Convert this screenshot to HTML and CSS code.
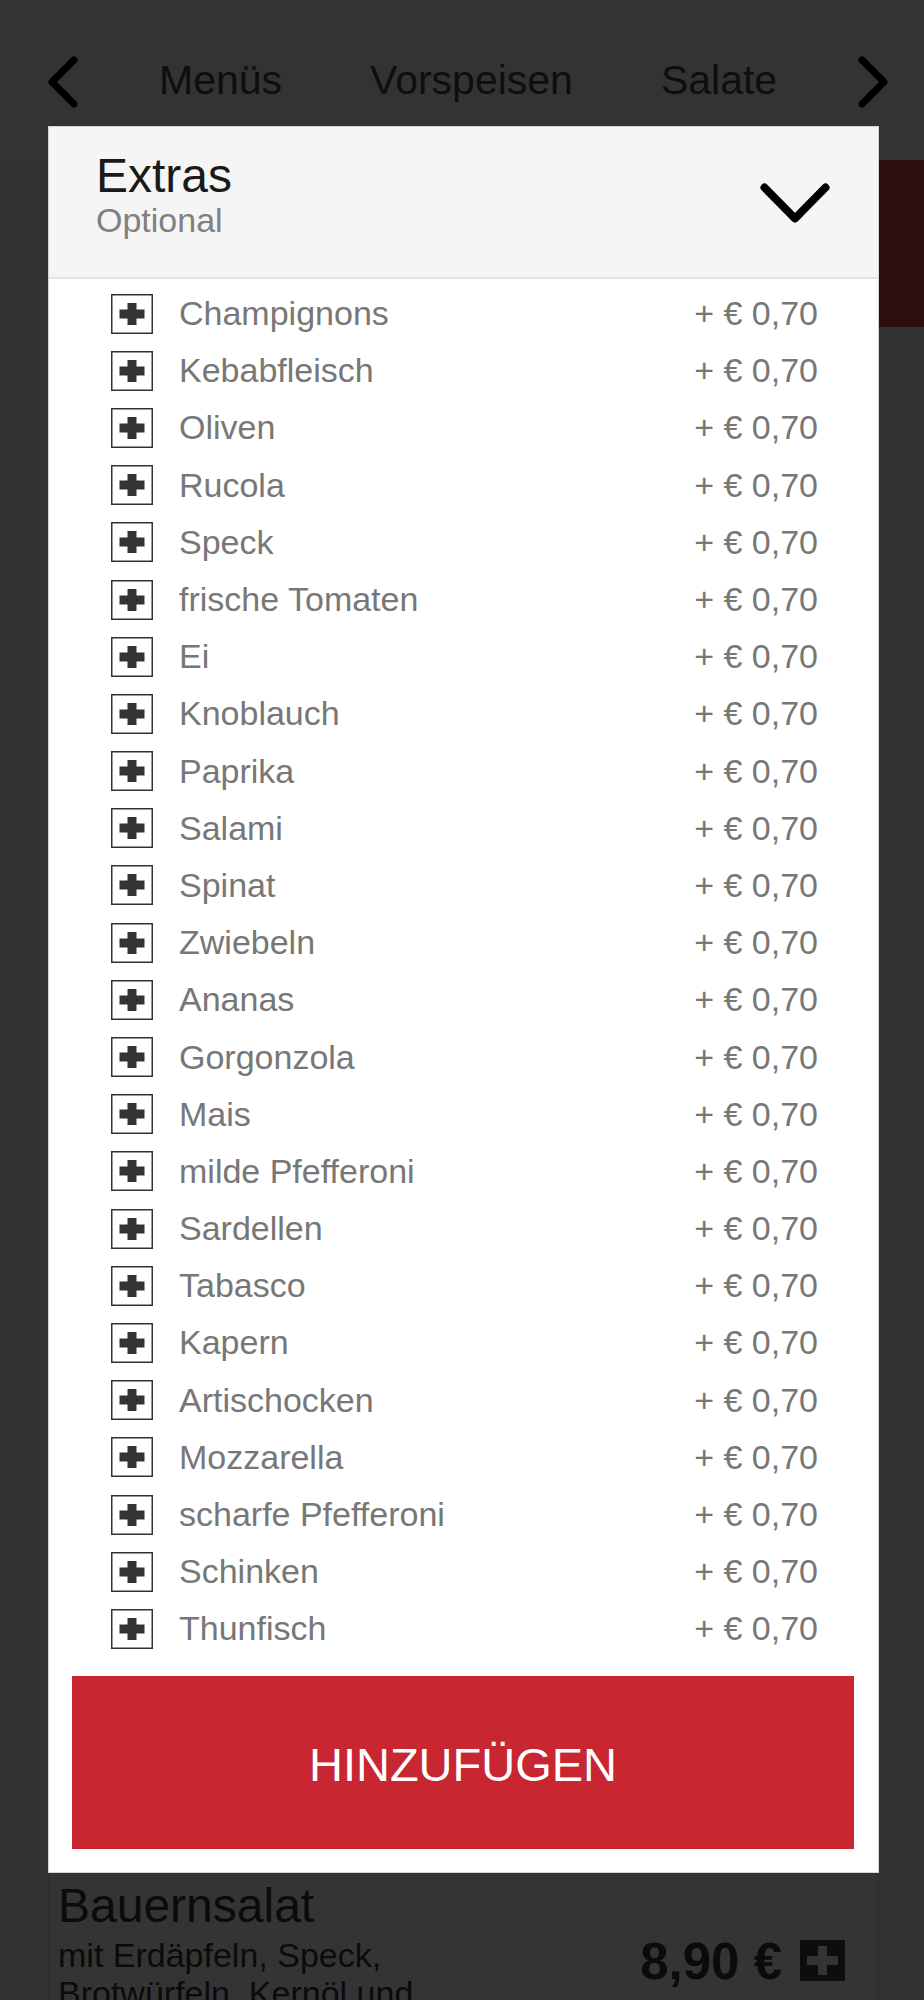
FILE: index.html
```html
<!DOCTYPE html>
<html lang="de">
<head>
    <meta charset="UTF-8">
    <meta name="viewport" content="width=device-width, initial-scale=1.0">
    <title>Salate – Extras</title>
    <link rel="stylesheet" href="styles.css">
</head>
<body>
    <!-- Seite hinter dem Dialog -->
    <div class="page">
        <nav class="cat-nav">
            <svg class="cat-arrow" width="32" height="52" viewBox="0 0 32 52"><polyline points="27,4 5,26 27,48"/></svg>
            <div class="cat-track">
                <span class="cat-item">Menüs</span>
                <span class="cat-item">Vorspeisen</span>
                <span class="cat-item">Salate</span>
            </div>
            <svg class="cat-arrow" width="32" height="52" viewBox="0 0 32 52"><polyline points="5,4 27,26 5,48"/></svg>
        </nav>

        <div class="banner">
            <div class="banner-btn"></div>
        </div>

        <div class="dish-list">
            <div class="dish">
                <div class="dish-title">Bauernsalat</div>
                <div class="dish-body">
                    <div class="dish-desc">mit Erdäpfeln, Speck, Brotwürfeln, Kernöl und Kürbiskernen</div>
                    <div class="dish-price">
                        <span>8,90 €</span>
                        <svg width="45" height="41" viewBox="0 0 45 41">
                            <rect width="45" height="41" fill="#0d0d0d"/>
                            <path d="M18 6h9v10h11v9H27v10h-9V25H7v-9h11z" fill="#333"/>
                        </svg>
                    </div>
                </div>
            </div>
        </div>
    </div>

    <!-- Dialog: Extras -->
    <div class="modal">
        <div class="modal-head">
            <div>
                <div class="modal-title">Extras</div>
                <div class="modal-sub">Optional</div>
            </div>
            <svg class="modal-toggle" width="70" height="40" viewBox="0 0 70 40"><polyline points="4.5,4.5 35,35.5 65.5,4.5"/></svg>
        </div>

        <ul class="extras">
            <li class="extra"><svg class="extra-check" width="42" height="40" viewBox="0 0 42 40"><rect x="0.75" y="0.75" width="40.5" height="38.5"/><path d="M16.5 9h9v6.5h8v9h-8V31h-9v-6.5h-8v-9h8z"/></svg><span class="extra-name">Champignons</span><span class="extra-price">+ € 0,70</span></li>
            <li class="extra"><svg class="extra-check" width="42" height="40" viewBox="0 0 42 40"><rect x="0.75" y="0.75" width="40.5" height="38.5"/><path d="M16.5 9h9v6.5h8v9h-8V31h-9v-6.5h-8v-9h8z"/></svg><span class="extra-name">Kebabfleisch</span><span class="extra-price">+ € 0,70</span></li>
            <li class="extra"><svg class="extra-check" width="42" height="40" viewBox="0 0 42 40"><rect x="0.75" y="0.75" width="40.5" height="38.5"/><path d="M16.5 9h9v6.5h8v9h-8V31h-9v-6.5h-8v-9h8z"/></svg><span class="extra-name">Oliven</span><span class="extra-price">+ € 0,70</span></li>
            <li class="extra"><svg class="extra-check" width="42" height="40" viewBox="0 0 42 40"><rect x="0.75" y="0.75" width="40.5" height="38.5"/><path d="M16.5 9h9v6.5h8v9h-8V31h-9v-6.5h-8v-9h8z"/></svg><span class="extra-name">Rucola</span><span class="extra-price">+ € 0,70</span></li>
            <li class="extra"><svg class="extra-check" width="42" height="40" viewBox="0 0 42 40"><rect x="0.75" y="0.75" width="40.5" height="38.5"/><path d="M16.5 9h9v6.5h8v9h-8V31h-9v-6.5h-8v-9h8z"/></svg><span class="extra-name">Speck</span><span class="extra-price">+ € 0,70</span></li>
            <li class="extra"><svg class="extra-check" width="42" height="40" viewBox="0 0 42 40"><rect x="0.75" y="0.75" width="40.5" height="38.5"/><path d="M16.5 9h9v6.5h8v9h-8V31h-9v-6.5h-8v-9h8z"/></svg><span class="extra-name">frische Tomaten</span><span class="extra-price">+ € 0,70</span></li>
            <li class="extra"><svg class="extra-check" width="42" height="40" viewBox="0 0 42 40"><rect x="0.75" y="0.75" width="40.5" height="38.5"/><path d="M16.5 9h9v6.5h8v9h-8V31h-9v-6.5h-8v-9h8z"/></svg><span class="extra-name">Ei</span><span class="extra-price">+ € 0,70</span></li>
            <li class="extra"><svg class="extra-check" width="42" height="40" viewBox="0 0 42 40"><rect x="0.75" y="0.75" width="40.5" height="38.5"/><path d="M16.5 9h9v6.5h8v9h-8V31h-9v-6.5h-8v-9h8z"/></svg><span class="extra-name">Knoblauch</span><span class="extra-price">+ € 0,70</span></li>
            <li class="extra"><svg class="extra-check" width="42" height="40" viewBox="0 0 42 40"><rect x="0.75" y="0.75" width="40.5" height="38.5"/><path d="M16.5 9h9v6.5h8v9h-8V31h-9v-6.5h-8v-9h8z"/></svg><span class="extra-name">Paprika</span><span class="extra-price">+ € 0,70</span></li>
            <li class="extra"><svg class="extra-check" width="42" height="40" viewBox="0 0 42 40"><rect x="0.75" y="0.75" width="40.5" height="38.5"/><path d="M16.5 9h9v6.5h8v9h-8V31h-9v-6.5h-8v-9h8z"/></svg><span class="extra-name">Salami</span><span class="extra-price">+ € 0,70</span></li>
            <li class="extra"><svg class="extra-check" width="42" height="40" viewBox="0 0 42 40"><rect x="0.75" y="0.75" width="40.5" height="38.5"/><path d="M16.5 9h9v6.5h8v9h-8V31h-9v-6.5h-8v-9h8z"/></svg><span class="extra-name">Spinat</span><span class="extra-price">+ € 0,70</span></li>
            <li class="extra"><svg class="extra-check" width="42" height="40" viewBox="0 0 42 40"><rect x="0.75" y="0.75" width="40.5" height="38.5"/><path d="M16.5 9h9v6.5h8v9h-8V31h-9v-6.5h-8v-9h8z"/></svg><span class="extra-name">Zwiebeln</span><span class="extra-price">+ € 0,70</span></li>
            <li class="extra"><svg class="extra-check" width="42" height="40" viewBox="0 0 42 40"><rect x="0.75" y="0.75" width="40.5" height="38.5"/><path d="M16.5 9h9v6.5h8v9h-8V31h-9v-6.5h-8v-9h8z"/></svg><span class="extra-name">Ananas</span><span class="extra-price">+ € 0,70</span></li>
            <li class="extra"><svg class="extra-check" width="42" height="40" viewBox="0 0 42 40"><rect x="0.75" y="0.75" width="40.5" height="38.5"/><path d="M16.5 9h9v6.5h8v9h-8V31h-9v-6.5h-8v-9h8z"/></svg><span class="extra-name">Gorgonzola</span><span class="extra-price">+ € 0,70</span></li>
            <li class="extra"><svg class="extra-check" width="42" height="40" viewBox="0 0 42 40"><rect x="0.75" y="0.75" width="40.5" height="38.5"/><path d="M16.5 9h9v6.5h8v9h-8V31h-9v-6.5h-8v-9h8z"/></svg><span class="extra-name">Mais</span><span class="extra-price">+ € 0,70</span></li>
            <li class="extra"><svg class="extra-check" width="42" height="40" viewBox="0 0 42 40"><rect x="0.75" y="0.75" width="40.5" height="38.5"/><path d="M16.5 9h9v6.5h8v9h-8V31h-9v-6.5h-8v-9h8z"/></svg><span class="extra-name">milde Pfefferoni</span><span class="extra-price">+ € 0,70</span></li>
            <li class="extra"><svg class="extra-check" width="42" height="40" viewBox="0 0 42 40"><rect x="0.75" y="0.75" width="40.5" height="38.5"/><path d="M16.5 9h9v6.5h8v9h-8V31h-9v-6.5h-8v-9h8z"/></svg><span class="extra-name">Sardellen</span><span class="extra-price">+ € 0,70</span></li>
            <li class="extra"><svg class="extra-check" width="42" height="40" viewBox="0 0 42 40"><rect x="0.75" y="0.75" width="40.5" height="38.5"/><path d="M16.5 9h9v6.5h8v9h-8V31h-9v-6.5h-8v-9h8z"/></svg><span class="extra-name">Tabasco</span><span class="extra-price">+ € 0,70</span></li>
            <li class="extra"><svg class="extra-check" width="42" height="40" viewBox="0 0 42 40"><rect x="0.75" y="0.75" width="40.5" height="38.5"/><path d="M16.5 9h9v6.5h8v9h-8V31h-9v-6.5h-8v-9h8z"/></svg><span class="extra-name">Kapern</span><span class="extra-price">+ € 0,70</span></li>
            <li class="extra"><svg class="extra-check" width="42" height="40" viewBox="0 0 42 40"><rect x="0.75" y="0.75" width="40.5" height="38.5"/><path d="M16.5 9h9v6.5h8v9h-8V31h-9v-6.5h-8v-9h8z"/></svg><span class="extra-name">Artischocken</span><span class="extra-price">+ € 0,70</span></li>
            <li class="extra"><svg class="extra-check" width="42" height="40" viewBox="0 0 42 40"><rect x="0.75" y="0.75" width="40.5" height="38.5"/><path d="M16.5 9h9v6.5h8v9h-8V31h-9v-6.5h-8v-9h8z"/></svg><span class="extra-name">Mozzarella</span><span class="extra-price">+ € 0,70</span></li>
            <li class="extra"><svg class="extra-check" width="42" height="40" viewBox="0 0 42 40"><rect x="0.75" y="0.75" width="40.5" height="38.5"/><path d="M16.5 9h9v6.5h8v9h-8V31h-9v-6.5h-8v-9h8z"/></svg><span class="extra-name">scharfe Pfefferoni</span><span class="extra-price">+ € 0,70</span></li>
            <li class="extra"><svg class="extra-check" width="42" height="40" viewBox="0 0 42 40"><rect x="0.75" y="0.75" width="40.5" height="38.5"/><path d="M16.5 9h9v6.5h8v9h-8V31h-9v-6.5h-8v-9h8z"/></svg><span class="extra-name">Schinken</span><span class="extra-price">+ € 0,70</span></li>
            <li class="extra"><svg class="extra-check" width="42" height="40" viewBox="0 0 42 40"><rect x="0.75" y="0.75" width="40.5" height="38.5"/><path d="M16.5 9h9v6.5h8v9h-8V31h-9v-6.5h-8v-9h8z"/></svg><span class="extra-name">Thunfisch</span><span class="extra-price">+ € 0,70</span></li>
        </ul>

        <button class="add-btn">HINZUFÜGEN</button>
    </div>
</body>
</html>
```

FILE: styles.css
```css
body {
    margin: 0;
    height: 2000px;
    overflow: hidden;
    background: #313131;
    font-family: "Liberation Sans", Arial, sans-serif;
    position: relative;
}

/* Kategorien oben */
.cat-nav {
    display: flex;
    align-items: flex-start;
    height: 160px;
    box-sizing: border-box;
    padding: 56px 35px 0 47px;
    background: #333;
}

.cat-arrow {
    flex: none;
}

.cat-arrow polyline {
    fill: none;
    stroke: #000;
    stroke-width: 7;
    stroke-linecap: round;
    stroke-linejoin: round;
}

.cat-track {
    flex: 1;
    display: flex;
    gap: 88px;
    padding-left: 80px;
    white-space: nowrap;
}

.cat-item {
    font-size: 41px;
    line-height: 48px;
    color: #0e0e0e;
}

.banner {
    display: flex;
    justify-content: flex-end;
    height: 167px;
    background: #313131;
}

.banner-btn {
    width: 140px;
    background: #2d0d10;
}

/* Liste der Gerichte, großteils vom Dialog verdeckt */
.dish-list {
    margin-top: 1541px;
    padding: 0 49px 0 47px;
}

.dish {
    background: #343434;
    border-left: 3px solid #2f2f2f;
    padding: 12px 30px 40px 8px;
}

.dish-title {
    font-size: 48px;
    line-height: 1.1;
    color: #0b0b0b;
}

.dish-body {
    display: flex;
    justify-content: space-between;
    margin-top: 3px;
}

.dish-desc {
    width: 420px;
    font-size: 34px;
    line-height: 38px;
    color: #0b0b0b;
}

.dish-price {
    display: flex;
    align-items: flex-start;
    gap: 18px;
    font-size: 51px;
    line-height: 51px;
    font-weight: bold;
    color: #0b0b0b;
}

.dish-price svg {
    margin-top: 4px;
}

/* Dialog */
.modal {
    position: absolute;
    top: 126px;
    left: 48px;
    width: 831px;
    box-sizing: border-box;
    background: #fff;
    border: 1px solid #d4d4d4;
    padding-bottom: 23px;
}

.modal-head {
    display: flex;
    justify-content: space-between;
    align-items: flex-start;
    height: 152px;
    box-sizing: border-box;
    padding: 25px 48px 0 47px;
    background: #f5f5f5;
    border-bottom: 2px solid #e3e3e3;
}

.modal-title {
    font-size: 48px;
    line-height: 48px;
    color: #1a1a1a;
}

.modal-sub {
    font-size: 34px;
    line-height: 40px;
    color: #808080;
}

.modal-toggle {
    margin-top: 31px;
}

.modal-toggle polyline {
    fill: none;
    stroke: #000;
    stroke-width: 8;
    stroke-linecap: round;
    stroke-linejoin: round;
}

.extras {
    list-style: none;
    margin: 0;
    padding: 6px 0 0;
}

.extra {
    display: flex;
    align-items: center;
    height: 57.2px;
    padding: 0 60px 0 62px;
    font-size: 34px;
    color: #777;
}

.extra-check {
    flex: none;
}

.extra-check rect {
    fill: #fff;
    stroke: #333;
    stroke-width: 1.5;
}

.extra-check path {
    fill: #333;
}

.extra-name {
    flex: 1;
    margin-left: 26px;
}

.add-btn {
    display: block;
    width: 782px;
    height: 173px;
    margin: 18px 0 0 23px;
    border: none;
    background: #c82630;
    color: #fff;
    font-family: inherit;
    font-size: 47px;
    padding: 4px 0 0;
}
```
